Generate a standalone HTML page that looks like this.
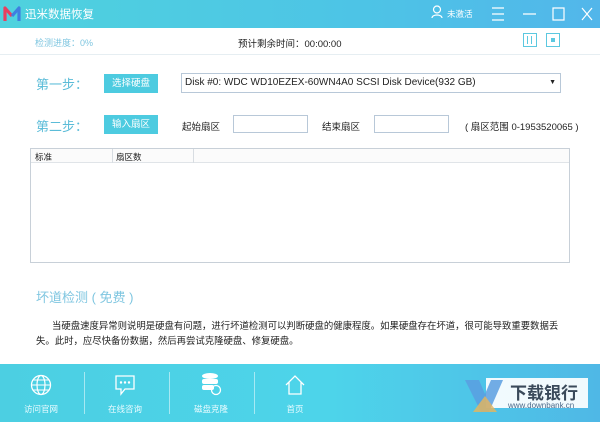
<!DOCTYPE html>
<html><head><meta charset="utf-8"><style>
*{margin:0;padding:0;box-sizing:border-box}
body{width:600px;height:422px;overflow:hidden;background:#fff;font-family:"Liberation Sans","Noto Sans CJK SC",sans-serif;position:relative;font-size:10px;color:#222}
.a{position:absolute}
.title{left:0;top:0;width:600px;height:28px;background:linear-gradient(90deg,#4fd2de,#4dc4e6 60%,#52b6ea)}
.btn{background:#4dcbe0;color:#fff;font-size:9.5px;text-align:center;line-height:19px;height:19px;width:54px}
.step{color:#5bbcd8;font-size:13px}
.inp{border:1px solid #b8c8d8;height:18px;background:#fff}
.foot{left:0;top:364px;width:600px;height:58px;background:linear-gradient(90deg,#4ccfe2,#4dd4ea 55%,#4fb8e6)}
.fi{color:#e8fbff;font-size:8.5px;text-align:center;width:60px}
.sep{width:1px;height:42px;background:rgba(255,255,255,.5);top:372px}
</style></head><body>
<div class="a title"></div>
<svg class="a" style="left:3px;top:5px" width="20" height="18"><path d="M2 16V3l7 8" fill="none" stroke="#e8405f" stroke-width="3.2" stroke-linejoin="round"/><path d="M9 11l7-8v13" fill="none" stroke="#3f7fe0" stroke-width="3.2" stroke-linejoin="round"/></svg>
<div class="a" style="left:25px;top:6px;color:#fff;font-size:11.5px">迅米数据恢复</div>
<svg class="a" style="left:431px;top:5px" width="12" height="14"><circle cx="6" cy="4.5" r="3.5" fill="none" stroke="#fff" stroke-width="1.2"/><path d="M1 13c0-4 10-4 10 0" fill="none" stroke="#fff" stroke-width="1.2"/></svg>
<div class="a" style="left:447px;top:8px;color:#fff;font-size:8.5px">未激活</div>
<svg class="a" style="left:492px;top:7px" width="104" height="14"><path d="M0 1h12M0 7h12M0 13h12M31 7h13M61 1h11v12h-11z M90 1l10 12M100 1l-10 12" fill="none" stroke="#fff" stroke-width="1.2"/></svg>
<div class="a" style="left:35px;top:36px;color:#7fc6e0;font-size:9px">检测进度：0%</div>
<div class="a" style="left:238px;top:36px;color:#222;font-size:9.5px">预计剩余时间：00:00:00</div>
<div class="a" style="left:523px;top:33px;width:14px;height:14px;border:1.5px solid #5cc8e0"><div class="a" style="left:3px;top:2px;width:5px;height:8px;border-left:1.5px solid #5cc8e0;border-right:1.5px solid #5cc8e0"></div></div>
<div class="a" style="left:546px;top:33px;width:14px;height:14px;border:1.5px solid #5cc8e0"><div class="a" style="left:4px;top:4px;width:4px;height:4px;background:#5cc8e0"></div></div>
<div class="a" style="left:0;top:54px;width:600px;height:1px;background:#e6eef2"></div>
<div class="a step" style="left:36px;top:74px">第一步：</div>
<div class="a btn" style="left:104px;top:74px">选择硬盘</div>
<div class="a inp" style="left:181px;top:73px;width:380px;height:20px;font-size:10px;line-height:18px;padding-left:3px">Disk #0: WDC WD10EZEX-60WN4A0 SCSI Disk Device(932 GB)<span class="a" style="right:4px;top:0;font-size:7px">▼</span></div>
<div class="a step" style="left:36px;top:116px">第二步：</div>
<div class="a btn" style="left:104px;top:115px">输入扇区</div>
<div class="a" style="left:182px;top:119px;font-size:9.5px">起始扇区</div>
<div class="a inp" style="left:233px;top:115px;width:75px"></div>
<div class="a" style="left:322px;top:119px;font-size:9.5px">结束扇区</div>
<div class="a inp" style="left:374px;top:115px;width:75px"></div>
<div class="a" style="left:465px;top:119px;font-size:9.5px">( 扇区范围 0-1953520065 )</div>
<div class="a" style="left:30px;top:148px;width:540px;height:115px;border:1px solid #c8d0d8"></div>
<div class="a" style="left:31px;top:149px;width:538px;height:14px;border-bottom:1px solid #e0e4e8;background:#fbfbfb"></div>
<div class="a" style="left:112px;top:149px;width:1px;height:14px;background:#d8dde2"></div>
<div class="a" style="left:193px;top:149px;width:1px;height:14px;background:#d8dde2"></div>
<div class="a" style="left:35px;top:151px;font-size:8.5px">标准</div>
<div class="a" style="left:116px;top:151px;font-size:8.5px">扇区数</div>
<div class="a" style="left:36px;top:287px;color:#7fc6e0;font-size:13px">坏道检测 ( 免费 )</div>
<div class="a" style="left:36px;top:318px;width:530px;font-size:9.4px;line-height:15px;text-indent:16px">当硬盘速度异常则说明是硬盘有问题，进行坏道检测可以判断硬盘的健康程度。如果硬盘存在坏道，很可能导致重要数据丢失。此时，应尽快备份数据，然后再尝试克隆硬盘、修复硬盘。</div>
<div class="a foot"></div>
<svg class="a" style="left:30px;top:374px" width="22" height="22"><circle cx="11" cy="11" r="9.5" fill="none" stroke="#fff" stroke-width="1.3"/><ellipse cx="11" cy="11" rx="4" ry="9.5" fill="none" stroke="#fff" stroke-width="1.2"/><path d="M1.5 11h19M3 6h16M3 16h16" stroke="#fff" stroke-width="1.1"/></svg>
<svg class="a" style="left:114px;top:374px" width="22" height="22"><path d="M2 2h18v13h-9l-4 5v-5h-5z" fill="none" stroke="#fff" stroke-width="1.3"/><circle cx="7" cy="8.5" r="1.2" fill="#fff"/><circle cx="11" cy="8.5" r="1.2" fill="#fff"/><circle cx="15" cy="8.5" r="1.2" fill="#fff"/></svg>
<svg class="a" style="left:200px;top:372px" width="22" height="24"><ellipse cx="10" cy="4" rx="8" ry="3" fill="#fff"/><rect x="2" y="7" width="16" height="5" rx="2" fill="#fff"/><rect x="2" y="13" width="12" height="5" rx="2" fill="#fff"/><circle cx="16" cy="18" r="4.5" fill="none" stroke="#fff" stroke-width="1.3"/></svg>
<svg class="a" style="left:284px;top:374px" width="22" height="22"><path d="M2 11L11 2l9 9M5 8v12h12V8" fill="none" stroke="#fff" stroke-width="1.3"/></svg>
<div class="a fi" style="left:11px;top:403px">访问官网</div>
<div class="a fi" style="left:95px;top:403px">在线咨询</div>
<div class="a fi" style="left:181px;top:403px">磁盘克隆</div>
<div class="a fi" style="left:265px;top:403px">首页</div>
<div class="a sep" style="left:84px"></div>
<div class="a sep" style="left:169px"></div>
<div class="a sep" style="left:254px"></div>
<div class="a" style="left:486px;top:378px;width:102px;height:30px;background:rgba(255,255,255,.92)"></div>
<svg class="a" style="left:465px;top:378px" width="40" height="36"><path d="M0 2h14l6 14 6-14h12L24 34h-8z" fill="#5b9ee0" opacity=".85"/><path d="M8 34l12-16 12 16z" fill="#e8b55a" opacity=".8"/></svg>
<div class="a" style="left:510px;top:379px;color:#3a4a5a;font-size:17px;font-weight:bold">下载银行</div>
<div class="a" style="left:508px;top:401px;color:#4a6a8a;font-size:8px">www.downbank.cn</div>
</body></html>
